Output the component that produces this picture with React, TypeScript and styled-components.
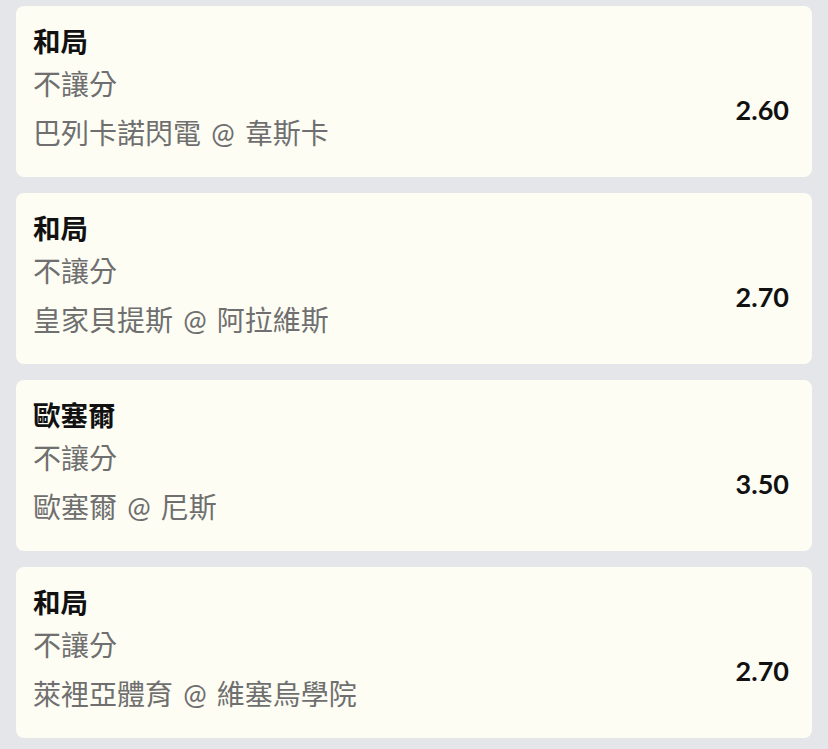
import styled, { createGlobalStyle } from "styled-components";

const BET_LIST_DATA = [
  { pick: "和局", market: "不讓分", match: "巴列卡諾閃電 @ 韋斯卡", odds: "2.60" },
  { pick: "和局", market: "不讓分", match: "皇家貝提斯 @ 阿拉維斯", odds: "2.70" },
  { pick: "歐塞爾", market: "不讓分", match: "歐塞爾 @ 尼斯", odds: "3.50" },
  { pick: "和局", market: "不讓分", match: "萊裡亞體育 @ 維塞烏學院", odds: "2.70" },
];

const App = () => {
  return (
    <>
      <GlobalStyle />
      <BetList>
        {BET_LIST_DATA.map((item, i) => (
          <BetCard key={i}>
            <Pick>{item.pick}</Pick>
            <DetailRow>
              <Details>
                <Market>{item.market}</Market>
                <Match>{item.match}</Match>
              </Details>
              <Odds>{item.odds}</Odds>
            </DetailRow>
          </BetCard>
        ))}
      </BetList>
    </>
  );
};

export default App;

const GlobalStyle = createGlobalStyle`
  html, body {
    margin: 0;
    padding: 0;
    background-color: #e5e6ea;
  }
  body {
    font-family: Lato, "Noto Sans CJK TC", sans-serif;
  }
`;

const BetList = styled.div`
  display: flex;
  flex-direction: column;
  gap: 16px;
  padding: 6px 16px 12px;
`;

const BetCard = styled.div`
  display: flex;
  flex-direction: column;
  height: 171px;
  box-sizing: border-box;
  padding: 20px 23px 26px 17px;
  border-radius: 8px;
  background-color: #fdfdf4;
`;

const Pick = styled.div`
  font-size: 27.5px;
  line-height: 32px;
  font-weight: 700;
  color: #111;
`;

const DetailRow = styled.div`
  display: flex;
  align-items: center;
  justify-content: space-between;
`;

const Details = styled.div`
  display: flex;
  flex-direction: column;
`;

const Market = styled.div`
  margin-top: 8px;
  font-size: 28px;
  line-height: 36px;
  color: #6f6f6f;
`;

const Match = styled.div`
  margin-top: 13px;
  font-size: 28px;
  line-height: 36px;
  word-spacing: 3px;
  color: #6f6f6f;
`;

const Odds = styled.div`
  padding-top: 9px;
  font-size: 27px;
  font-weight: 700;
  color: #111;
`;
